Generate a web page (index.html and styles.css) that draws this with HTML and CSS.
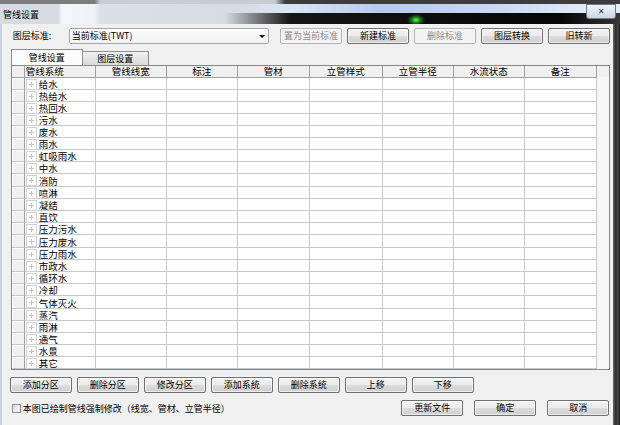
FILE: index.html
```html
<!DOCTYPE html>
<html>
<head>
<meta charset="utf-8">
<title>管线设置</title>
<link rel="stylesheet" href="styles.css">
</head>
<body>
<div class="window">
  <div class="titlebar">
    <span class="title">管线设置</span>
    <span class="close">✕</span>
  </div>
  <div class="frame">
    <div class="edge-left"></div>
    <div class="client">
      <div class="toolbar">
        <span class="lbl">图层标准:</span>
        <div class="select"><span class="sel-text">当前标准(TWT)</span><span class="arrow"></span></div>
        <div class="topbtns">
          <button class="btn" disabled>置为当前标准</button>
          <button class="btn">新建标准</button>
          <button class="btn" disabled>删除标准</button>
          <button class="btn">图层转换</button>
          <button class="btn">旧转新</button>
        </div>
      </div>
      <div class="tabs">
        <div class="tab active">管线设置</div>
        <div class="tab">图层设置</div>
      </div>
      <div class="grid">
        <div class="gtable">
          <div class="hc"></div><div class="hc left">管线系统</div><div class="hc">管线线宽</div><div class="hc">标注</div><div class="hc">管材</div><div class="hc">立管样式</div><div class="hc">立管半径</div><div class="hc">水流状态</div><div class="hc">备注</div>
          <div class="rh"></div><div class="c name">给水</div><div class="c"></div><div class="c"></div><div class="c"></div><div class="c"></div><div class="c"></div><div class="c"></div><div class="c"></div>
          <div class="rh"></div><div class="c name">热给水</div><div class="c"></div><div class="c"></div><div class="c"></div><div class="c"></div><div class="c"></div><div class="c"></div><div class="c"></div>
          <div class="rh"></div><div class="c name">热回水</div><div class="c"></div><div class="c"></div><div class="c"></div><div class="c"></div><div class="c"></div><div class="c"></div><div class="c"></div>
          <div class="rh"></div><div class="c name">污水</div><div class="c"></div><div class="c"></div><div class="c"></div><div class="c"></div><div class="c"></div><div class="c"></div><div class="c"></div>
          <div class="rh"></div><div class="c name">废水</div><div class="c"></div><div class="c"></div><div class="c"></div><div class="c"></div><div class="c"></div><div class="c"></div><div class="c"></div>
          <div class="rh"></div><div class="c name">雨水</div><div class="c"></div><div class="c"></div><div class="c"></div><div class="c"></div><div class="c"></div><div class="c"></div><div class="c"></div>
          <div class="rh"></div><div class="c name">虹吸雨水</div><div class="c"></div><div class="c"></div><div class="c"></div><div class="c"></div><div class="c"></div><div class="c"></div><div class="c"></div>
          <div class="rh"></div><div class="c name">中水</div><div class="c"></div><div class="c"></div><div class="c"></div><div class="c"></div><div class="c"></div><div class="c"></div><div class="c"></div>
          <div class="rh"></div><div class="c name">消防</div><div class="c"></div><div class="c"></div><div class="c"></div><div class="c"></div><div class="c"></div><div class="c"></div><div class="c"></div>
          <div class="rh"></div><div class="c name">喷淋</div><div class="c"></div><div class="c"></div><div class="c"></div><div class="c"></div><div class="c"></div><div class="c"></div><div class="c"></div>
          <div class="rh"></div><div class="c name">凝结</div><div class="c"></div><div class="c"></div><div class="c"></div><div class="c"></div><div class="c"></div><div class="c"></div><div class="c"></div>
          <div class="rh"></div><div class="c name">直饮</div><div class="c"></div><div class="c"></div><div class="c"></div><div class="c"></div><div class="c"></div><div class="c"></div><div class="c"></div>
          <div class="rh"></div><div class="c name">压力污水</div><div class="c"></div><div class="c"></div><div class="c"></div><div class="c"></div><div class="c"></div><div class="c"></div><div class="c"></div>
          <div class="rh"></div><div class="c name">压力废水</div><div class="c"></div><div class="c"></div><div class="c"></div><div class="c"></div><div class="c"></div><div class="c"></div><div class="c"></div>
          <div class="rh"></div><div class="c name">压力雨水</div><div class="c"></div><div class="c"></div><div class="c"></div><div class="c"></div><div class="c"></div><div class="c"></div><div class="c"></div>
          <div class="rh"></div><div class="c name">市政水</div><div class="c"></div><div class="c"></div><div class="c"></div><div class="c"></div><div class="c"></div><div class="c"></div><div class="c"></div>
          <div class="rh"></div><div class="c name">循环水</div><div class="c"></div><div class="c"></div><div class="c"></div><div class="c"></div><div class="c"></div><div class="c"></div><div class="c"></div>
          <div class="rh"></div><div class="c name">冷却</div><div class="c"></div><div class="c"></div><div class="c"></div><div class="c"></div><div class="c"></div><div class="c"></div><div class="c"></div>
          <div class="rh"></div><div class="c name">气体灭火</div><div class="c"></div><div class="c"></div><div class="c"></div><div class="c"></div><div class="c"></div><div class="c"></div><div class="c"></div>
          <div class="rh"></div><div class="c name">蒸汽</div><div class="c"></div><div class="c"></div><div class="c"></div><div class="c"></div><div class="c"></div><div class="c"></div><div class="c"></div>
          <div class="rh"></div><div class="c name">雨淋</div><div class="c"></div><div class="c"></div><div class="c"></div><div class="c"></div><div class="c"></div><div class="c"></div><div class="c"></div>
          <div class="rh"></div><div class="c name">通气</div><div class="c"></div><div class="c"></div><div class="c"></div><div class="c"></div><div class="c"></div><div class="c"></div><div class="c"></div>
          <div class="rh"></div><div class="c name">水景</div><div class="c"></div><div class="c"></div><div class="c"></div><div class="c"></div><div class="c"></div><div class="c"></div><div class="c"></div>
          <div class="rh"></div><div class="c name">其它</div><div class="c"></div><div class="c"></div><div class="c"></div><div class="c"></div><div class="c"></div><div class="c"></div><div class="c"></div>
        </div>
      </div>
      <div class="actions">
        <button class="btn">添加分区</button>
        <button class="btn">删除分区</button>
        <button class="btn">修改分区</button>
        <button class="btn">添加系统</button>
        <button class="btn">删除系统</button>
        <button class="btn">上移</button>
        <button class="btn">下移</button>
      </div>
      <div class="footer">
        <label class="check"><span class="box"></span><span>本图已绘制管线强制修改（线宽、管材、立管半径）</span></label>
        <div class="footbtns">
          <button class="btn">更新文件</button>
          <button class="btn">确定</button>
          <button class="btn">取消</button>
        </div>
      </div>
    </div>
    <div class="edge-right"></div>
  </div>
</div>
</body>
</html>
```

FILE: styles.css
```css
* { box-sizing: border-box; }
html, body { margin: 0; padding: 0; }
body {
  width: 620px;
  height: 425px;
  overflow: hidden;
  font-family: "Noto Sans CJK SC", "Noto Sans", sans-serif;
  font-size: 9px;
  color: #000;
  background: #f0f0f0;
}
.window {
  display: flex;
  flex-direction: column;
  width: 620px;
  height: 425px;
}
.titlebar {
  flex: none;
  height: 24px;
  display: flex;
  align-items: flex-start;
  background:
    radial-gradient(ellipse 9px 6px at 416px 20px, #5dff5d 0, rgba(40, 210, 40, 0.5) 50%, rgba(0, 0, 0, 0) 100%),
    linear-gradient(to right, rgba(0, 0, 0, 0) 0, rgba(0, 0, 0, 0) 225px, #151515 290px, #050505 560px, #2e2e2e 612px, #3a3a3a 620px) 0 13px / 100% 11px no-repeat,
    linear-gradient(to right, rgba(0, 0, 0, 0) 240px, #dbe6f5 290px, #b7caef 380px, #c6d5f2 480px, #e4ecf8 600px) 0 4px / 100% 9px no-repeat,
    linear-gradient(to right, #7c7c7c 0, #7c7c7c 95px, #c6cdd4 100px, #c6cdd4 275px, #3d3d3d 285px, #3d3d3d 100%) 0 0 / 100% 4px no-repeat,
    linear-gradient(to right, #d6dce2 0, #d6dce2 58px, #f4f7fa 62px, #eef2f6 95px, #d9e0e8 100px, #d5dce4 240px);
}
.title {
  margin: 9px 0 0 3px;
  line-height: 11px;
  font-size: 9px;
}
.close {
  margin: 4px 4px 0 auto;
  width: 30px;
  height: 15px;
  border: 1px solid rgba(70, 75, 90, 0.7);
  border-radius: 0 0 3px 3px;
  background: linear-gradient(#eef3f9, #cbd7e6);
  display: flex;
  align-items: center;
  justify-content: center;
  font-size: 8px;
  line-height: 1;
  color: #3a3a3a;
  font-family: "DejaVu Sans", sans-serif;
  font-weight: bold;
}
.frame {
  flex: 1;
  display: flex;
  min-height: 0;
}
.edge-left {
  width: 2px;
  background: #c5d3e2;
}
.edge-right {
  width: 8px;
  background: linear-gradient(to right, #6a6a6a, #2a2a2a 40%, #4a4a4a 65%, #1c1c1c);
}
.client {
  flex: 1;
  background: #f0f0f0;
  padding: 4px 3px 0 9px;
  display: flex;
  flex-direction: column;
}
.toolbar {
  display: flex;
  height: 16px;
  align-items: stretch;
}
.lbl {
  width: 58px;
  padding-left: 2px;
  line-height: 16px;
}
.select {
  width: 200px;
  height: 16px;
  border: 1px solid #a5a5a5;
  border-radius: 2px;
  background: linear-gradient(#fdfdfd, #f2f2f2);
  display: flex;
  align-items: center;
  padding-left: 2px;
}
.sel-text {
  flex: 1;
  line-height: 14px;
}
.arrow {
  width: 0;
  height: 0;
  border-left: 3px solid transparent;
  border-right: 3px solid transparent;
  border-top: 3px solid #000;
  margin-right: 3px;
}
.topbtns {
  display: flex;
  gap: 4.5px;
  margin-left: 11px;
}
.topbtns .btn { width: 62.5px; }
.btn {
  width: 62px;
  height: 16px;
  padding: 0;
  border: 1px solid #707070;
  border-radius: 2px;
  background: linear-gradient(#f3f3f3 0%, #ebebeb 50%, #dcdcdc 50%, #cfcfcf 100%);
  font-family: inherit;
  font-size: 9px;
  line-height: 14px;
  color: #000;
  box-shadow: inset 0 0 0 1px rgba(255, 255, 255, 0.6);
}
.btn:disabled {
  border-color: #b2b6b9;
  background: #f4f4f4;
  color: #8a8a8a;
  box-shadow: none;
}
.tabs {
  display: flex;
  align-items: flex-end;
  height: 16px;
  margin-top: 5px;
}
.tab {
  height: 14px;
  width: 67px;
  margin-left: -1px;
  border: 1px solid #8c8e94;
  border-bottom: none;
  background: linear-gradient(#f2f2f2, #d9d9d9);
  text-align: center;
  line-height: 13px;
}
.tab.active {
  height: 16px;
  width: 72px;
  margin-left: 0;
  background: #fcfcfc;
  line-height: 15px;
  position: relative;
  z-index: 1;
}
.grid {
  width: 599px;
  height: 305px;
  border: 1px solid #828790;
  background: linear-gradient(#f0f0f0 0, #f0f0f0 11px, #f6f6f6 11px);
}
.gtable {
  display: grid;
  grid-template-columns: 13px 71px 71px 71px 72px 73px 71px 71px 72px;
  grid-template-rows: 12px repeat(8, 12px) 13px repeat(4, 12px) 13px repeat(4, 12px) 13px repeat(5, 12px);
  width: 585px;
}
.hc {
  background: #f0f0f0;
  border-right: 1px solid #a0a0a0;
  border-bottom: 1px solid #a0a0a0;
  text-align: center;
  line-height: 11px;
  font-size: 9.5px;
  white-space: nowrap;
}
.hc.left {
  text-align: left;
  padding-left: 1px;
}
.rh {
  background: #f0f0f0;
  border-right: 1px solid #a0a0a0;
  border-bottom: 1px solid #c6c6c6;
  box-shadow: inset 1px 1px 0 #ffffff;
}
.c {
  background: #fff;
  border-right: 1px solid #c8c8c8;
  border-bottom: 1px solid #c8c8c8;
}
.name {
  display: flex;
  align-items: center;
  padding-left: 1px;
  padding-top: 1px;
  font-size: 9.5px;
  line-height: 10px;
  white-space: nowrap;
}
.name::before {
  content: "";
  flex: none;
  width: 9px;
  height: 9px;
  margin-right: 2px;
  border: 1px solid #d2d2d2;
  background:
    linear-gradient(#c4c4c4, #c4c4c4) center / 5px 1px no-repeat,
    linear-gradient(#c4c4c4, #c4c4c4) center / 1px 5px no-repeat,
    #ffffff;
}
.actions {
  display: flex;
  gap: 5px;
  margin-top: 7px;
  margin-left: -1px;
}
.footer {
  display: flex;
  align-items: center;
  margin-top: 7px;
  height: 16px;
}
.check {
  display: flex;
  align-items: center;
  gap: 2px;
  padding-left: 1px;
}
.box {
  width: 9px;
  height: 9px;
  border: 1px solid #8f8f8f;
  background: linear-gradient(135deg, #dcdcdc, #f8f8f8);
}
.footbtns {
  display: flex;
  gap: 11px;
  margin-left: auto;
  margin-right: 1px;
}
```
